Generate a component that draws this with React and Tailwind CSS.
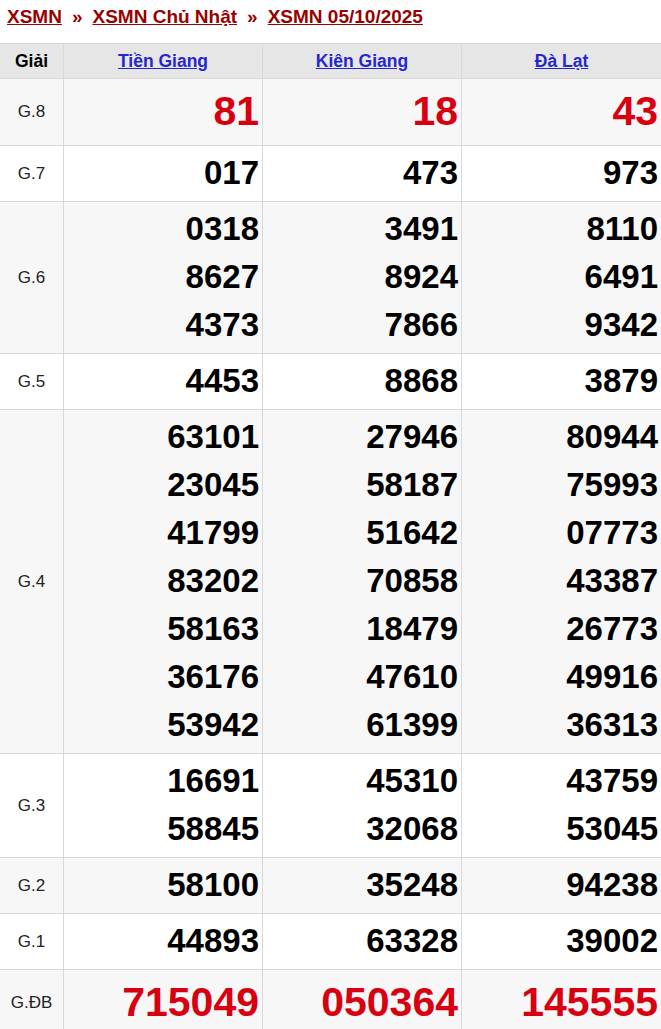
import React from "react";

const stations = ["Tiền Giang", "Kiên Giang", "Đà Lạt"];

const rows = [
  { name: "G.8", big: true, values: [["81"], ["18"], ["43"]] },
  { name: "G.7", values: [["017"], ["473"], ["973"]] },
  {
    name: "G.6",
    values: [
      ["0318", "8627", "4373"],
      ["3491", "8924", "7866"],
      ["8110", "6491", "9342"],
    ],
  },
  { name: "G.5", values: [["4453"], ["8868"], ["3879"]] },
  {
    name: "G.4",
    values: [
      ["63101", "23045", "41799", "83202", "58163", "36176", "53942"],
      ["27946", "58187", "51642", "70858", "18479", "47610", "61399"],
      ["80944", "75993", "07773", "43387", "26773", "49916", "36313"],
    ],
  },
  {
    name: "G.3",
    values: [
      ["16691", "58845"],
      ["45310", "32068"],
      ["43759", "53045"],
    ],
  },
  { name: "G.2", values: [["58100"], ["35248"], ["94238"]] },
  { name: "G.1", values: [["44893"], ["63328"], ["39002"]] },
  { name: "G.ĐB", big: true, values: [["715049"], ["050364"], ["145555"]] },
];

const Breadcrumb = () => (
  <div className="h-[43px] pt-[5px] pl-[7px] text-[19px] font-bold leading-[24px] text-[#990000]">
    <a href="#" className="underline">XSMN</a>
    <span className="mx-[10px]">»</span>
    <a href="#" className="underline">XSMN Chủ Nhật</a>
    <span className="mx-[10px]">»</span>
    <a href="#" className="underline">XSMN 05/10/2025</a>
  </div>
);

const App = () => {
  return (
    <div className="w-[661px] overflow-hidden bg-white font-['Liberation_Sans',Arial,sans-serif]">
      <Breadcrumb />
      <table className="-ml-px w-[662px] table-fixed border-collapse">
        <colgroup>
          <col className="w-[64px]" />
          <col className="w-[199px]" />
          <col className="w-[199px]" />
          <col className="w-[200px]" />
        </colgroup>
        <thead>
          <tr className="bg-[#e6e6e6]">
            <th className="h-[35px] border border-[#d8d8d8] text-center text-[17.5px] font-bold text-black">
              Giải
            </th>
            {stations.map((s) => (
              <th
                key={s}
                className="border border-[#d8d8d8] text-center text-[17.5px] font-bold text-[#2626d0]"
              >
                <a href="#" className="underline">{s}</a>
              </th>
            ))}
          </tr>
        </thead>
        <tbody>
          {rows.map((row, i) => (
            <tr key={row.name} className={i % 2 === 0 ? "bg-[#f7f7f7]" : "bg-white"}>
              <td className="border border-[#d8d8d8] text-center text-[17px] text-[#222]">
                {row.name}
              </td>
              {row.values.map((nums, j) => (
                <td
                  key={j}
                  className={
                    row.big
                      ? "border border-[#d8d8d8] pt-[3px] pb-[4px] pr-[3px] text-right text-[41px] font-bold leading-[59px] text-[#d80010]"
                      : "border border-[#d8d8d8] pt-[3px] pb-[4px] pr-[3px] text-right text-[33px] font-bold leading-[48px] text-black"
                  }
                >
                  {nums.map((n) => (
                    <div key={n}>{n}</div>
                  ))}
                </td>
              ))}
            </tr>
          ))}
        </tbody>
      </table>
    </div>
  );
};

export default App;
